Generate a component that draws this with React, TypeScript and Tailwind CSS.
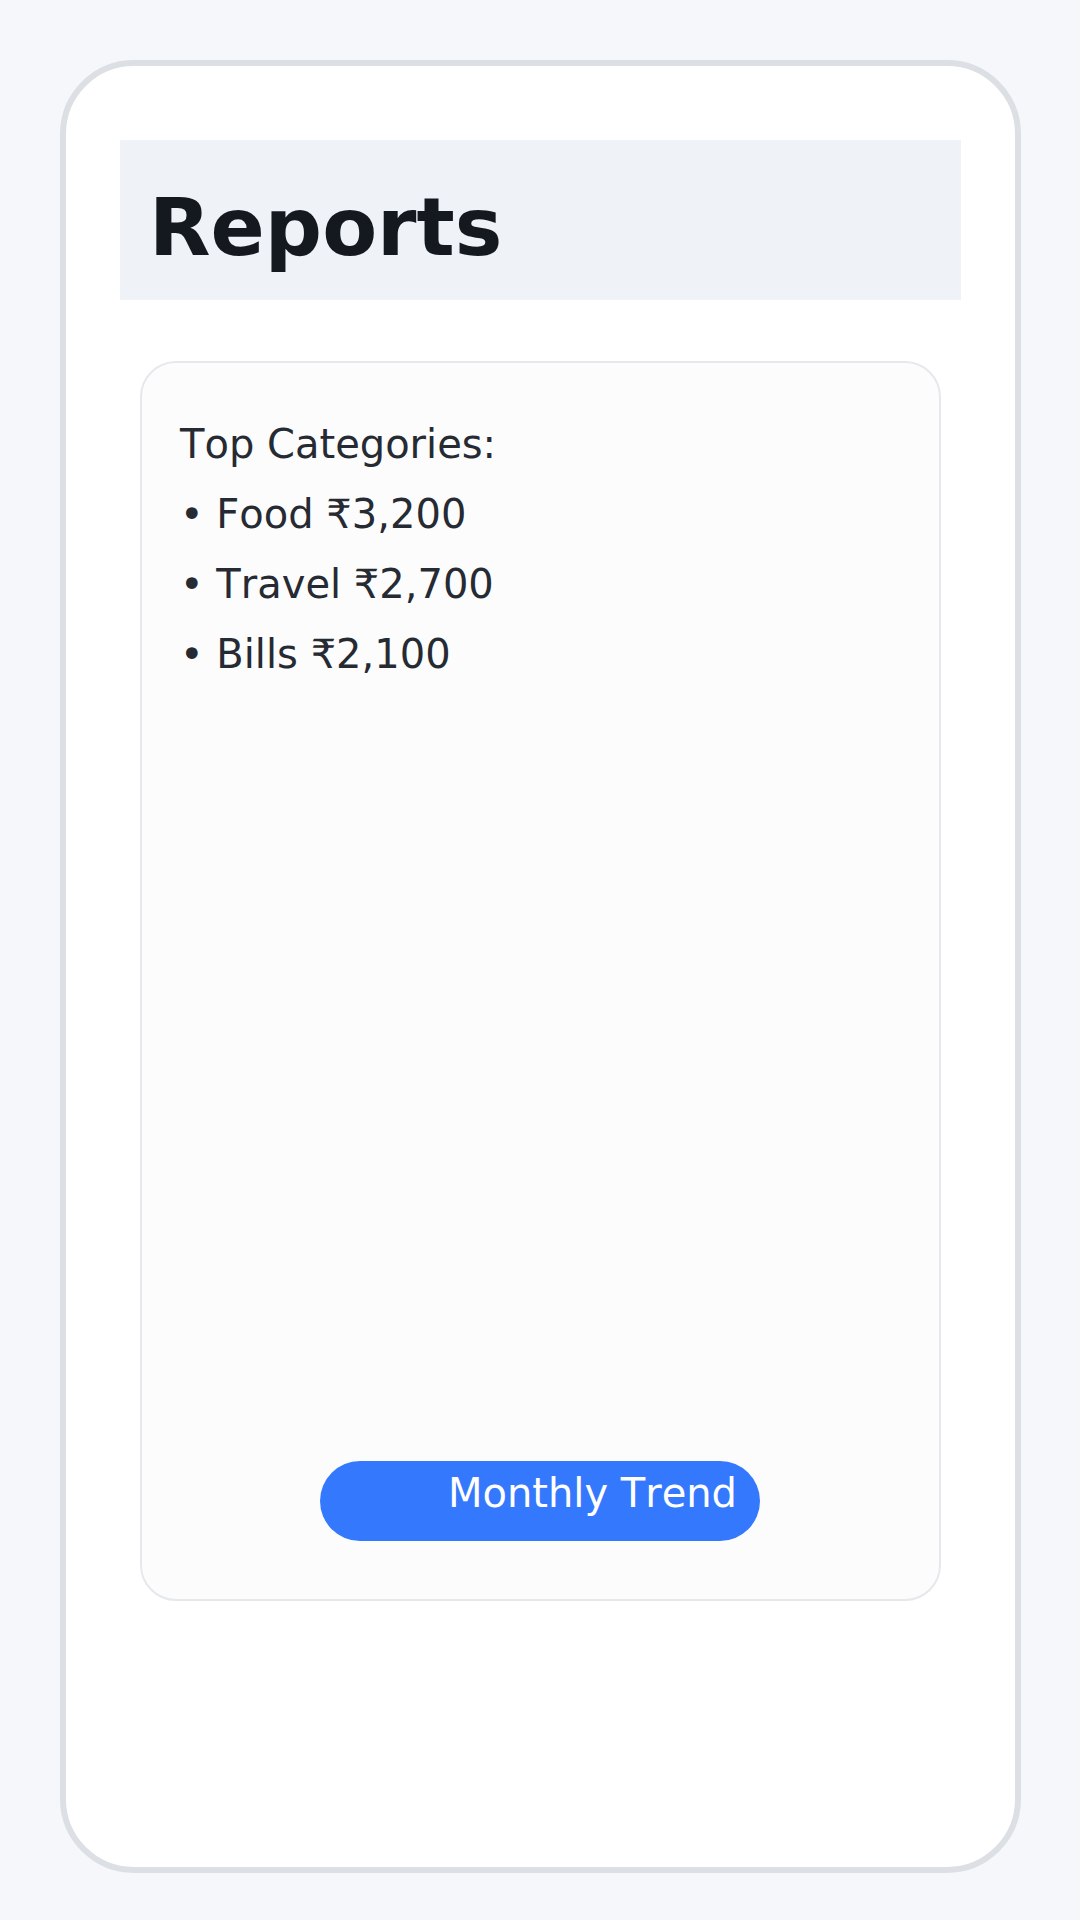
import React from "react";

export default function App() {
  const items = ["Food ₹3,200", "Travel ₹2,700", "Bills ₹2,100"];
  return (
    <div
      className="w-[1080px] h-[1920px] bg-[#f5f7fa] pt-[60px] pl-[60px] [font-kerning:none]"
      style={{ fontFamily: '"DejaVu Sans", "Noto Sans", sans-serif' }}
    >
      <div className="w-[961px] h-[1813px] border-[6px] border-[#dce0e5] rounded-[74px] bg-white pl-[54px] pr-[54px] pt-[74px] flex flex-col">
        <div className="h-[160px] w-[841px] bg-[#eff2f7] pl-[29px] pt-[48px]">
          <h1 className="text-[80px] leading-none font-bold text-[#14181f]">Reports</h1>
        </div>
        <div className="ml-[20px] mt-[61px] w-[801px] h-[1240px] rounded-[36px] border-2 border-[#e5e8ec] bg-[#fcfcfc] flex flex-col pl-[38px] pt-[46px]">
          <div className="text-[40px] leading-[70px] text-[#262a33]">
            <div>Top Categories:</div>
            {items.map((t) => (
              <div key={t}>• {t}</div>
            ))}
          </div>
          <div className="mt-auto mb-[58px] ml-[140px] w-[440px] h-[80px] rounded-full bg-[#3478fe] flex items-start justify-end pr-[23px] pt-[9px]">
            <span className="text-[40px] leading-[normal] text-white">Monthly Trend</span>
          </div>
        </div>
      </div>
    </div>
  );
}
